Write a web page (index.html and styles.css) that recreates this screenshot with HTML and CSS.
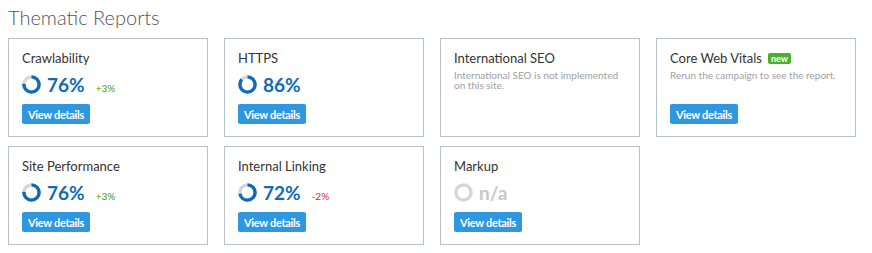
FILE: index.html
```html
<!DOCTYPE html>
<html>
<head>
<meta charset="utf-8">
<link rel="stylesheet" href="styles.css">
</head>
<body>
<h1 class="page-title">Thematic Reports</h1>
<div class="grid">
  <div class="card">
    <div class="card-title">Crawlability</div>
    <div class="score">
      <svg class="donut" viewBox="0 0 20 20"><circle cx="10" cy="10" r="8" class="track"/><circle cx="10" cy="10" r="8" class="bar" stroke-dasharray="38.2 50.3"/></svg>
      <span class="value">76%</span><span class="delta up">+3%</span>
    </div>
    <button class="btn">View details</button>
  </div>
  <div class="card">
    <div class="card-title">HTTPS</div>
    <div class="score">
      <svg class="donut" viewBox="0 0 20 20"><circle cx="10" cy="10" r="8" class="track"/><circle cx="10" cy="10" r="8" class="bar" stroke-dasharray="43.2 50.3"/></svg>
      <span class="value">86%</span>
    </div>
    <button class="btn">View details</button>
  </div>
  <div class="card">
    <div class="card-title">International SEO</div>
    <div class="desc">International SEO is not implemented on this site.</div>
  </div>
  <div class="card">
    <div class="card-title">Core Web Vitals <span class="badge">new</span></div>
    <div class="desc">Rerun the campaign to see the report.</div>
    <button class="btn">View details</button>
  </div>
  <div class="card">
    <div class="card-title">Site Performance</div>
    <div class="score">
      <svg class="donut" viewBox="0 0 20 20"><circle cx="10" cy="10" r="8" class="track"/><circle cx="10" cy="10" r="8" class="bar" stroke-dasharray="38.2 50.3"/></svg>
      <span class="value">76%</span><span class="delta up">+3%</span>
    </div>
    <button class="btn">View details</button>
  </div>
  <div class="card">
    <div class="card-title">Internal Linking</div>
    <div class="score">
      <svg class="donut" viewBox="0 0 20 20"><circle cx="10" cy="10" r="8" class="track"/><circle cx="10" cy="10" r="8" class="bar" stroke-dasharray="36.2 50.3"/></svg>
      <span class="value">72%</span><span class="delta down">-2%</span>
    </div>
    <button class="btn">View details</button>
  </div>
  <div class="card">
    <div class="card-title">Markup</div>
    <div class="score">
      <svg class="donut" viewBox="0 0 20 20"><circle cx="10" cy="10" r="8" class="track"/></svg>
      <span class="value na">n/a</span>
    </div>
    <button class="btn">View details</button>
  </div>
</div>
</body>
</html>
```
FILE: styles.css
```css
* { box-sizing: border-box; }
body {
  margin: 0;
  padding: 0 8px;
  background: #fff;
  font-family: Lato, "Open Sans", sans-serif;
  color: #333;
}
.page-title {
  margin: 0;
  padding-top: 5px;
  height: 38px;
  font-size: 20px;
  line-height: 24px;
  font-weight: 300;
  color: #555;
}
.grid {
  display: grid;
  grid-template-columns: repeat(4, 200px);
  grid-auto-rows: 99px;
  column-gap: 16px;
  row-gap: 9px;
}
.card {
  border: 1px solid #b7c3c8;
  padding: 11px 13px 12px;
  display: flex;
  flex-direction: column;
  align-items: flex-start;
}
.card-title {
  font-size: 13px;
  line-height: 16px;
  color: #333;
  display: flex;
  align-items: center;
}
.badge {
  margin-left: 6px;
  background: #4bae2f;
  color: #fff;
  font-size: 9px;
  font-weight: 700;
  line-height: 11px;
  padding: 0 3px;
  border-radius: 2px;
}
.score {
  display: flex;
  align-items: center;
  height: 22px;
  margin-top: 7px;
}
.donut {
  width: 19px;
  height: 19px;
  margin-right: 6px;
  transform: rotate(-90deg);
}
.donut circle {
  fill: none;
  stroke-width: 3.6;
}
.donut .track { stroke: #d6d6d6; }
.donut .bar { stroke: #0f6db8; }
.value {
  font-size: 19px;
  font-weight: 700;
  color: #0f6db8;
}
.value.na { color: #c8c8c8; }
.delta {
  font-size: 10px;
  margin-left: 11px;
  margin-top: 8px;
}
.delta.up { color: #3a9b1b; }
.delta.down { color: #e0292b; }
.desc {
  margin-top: 4px;
  font-size: 10px;
  line-height: 10px;
  color: #a0a0a0;
  width: 170px;
}
.btn {
  margin-top: auto;
  border: none;
  background: #2f96e0;
  color: #fff;
  font-family: inherit;
  font-size: 11px;
  font-weight: 700;
  height: 20px;
  padding: 0 6px;
  border-radius: 2px;
  letter-spacing: -0.3px;
}
```
